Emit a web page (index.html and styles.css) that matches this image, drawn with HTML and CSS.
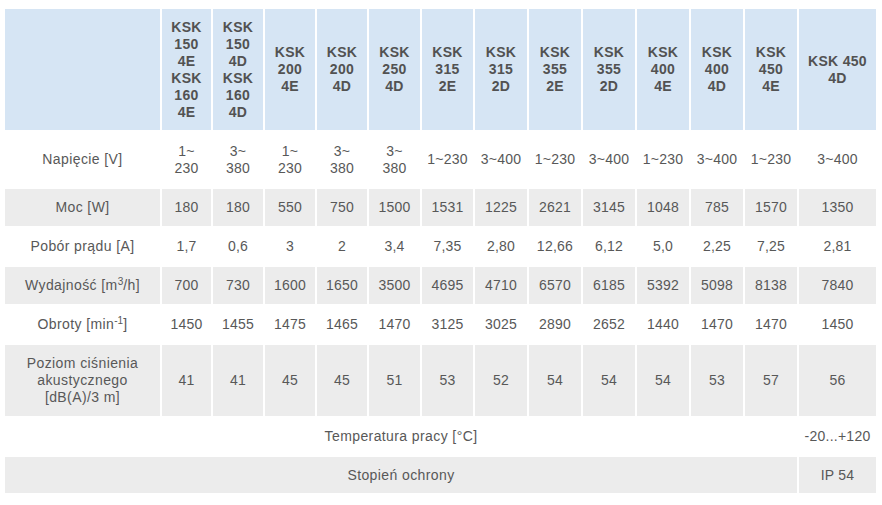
FILE: index.html
```html
<!DOCTYPE html>
<html lang="pl">
<head>
<meta charset="utf-8">
<title>KSK</title>
<link rel="stylesheet" href="styles.css">
</head>
<body>
<table class="spec">
  <colgroup>
    <col class="c-first">
    <col class="c49"><col class="c50"><col class="c50"><col class="c50">
    <col class="c51"><col class="c51"><col class="c52"><col class="c52">
    <col class="c52"><col class="c52"><col class="c52"><col class="c52">
    <col class="c-last">
  </colgroup>
  <thead>
    <tr class="r-head">
      <th></th>
      <th>KSK 150 4E KSK 160 4E</th>
      <th>KSK 150 4D KSK 160 4D</th>
      <th>KSK 200 4E</th>
      <th>KSK 200 4D</th>
      <th>KSK 250 4D</th>
      <th>KSK 315 2E</th>
      <th>KSK 315 2D</th>
      <th>KSK 355 2E</th>
      <th>KSK 355 2D</th>
      <th>KSK 400 4E</th>
      <th>KSK 400 4D</th>
      <th>KSK 450 4E</th>
      <th>KSK 450 4D</th>
    </tr>
  </thead>
  <tbody>
    <tr class="r-volt">
      <td class="label">Napięcie [V]</td>
      <td>1~ 230</td><td>3~ 380</td><td>1~ 230</td><td>3~ 380</td><td>3~ 380</td>
      <td>1~230</td><td>3~400</td><td>1~230</td><td>3~400</td><td>1~230</td><td>3~400</td><td>1~230</td><td>3~400</td>
    </tr>
    <tr class="r-std grey">
      <td class="label">Moc [W]</td>
      <td>180</td><td>180</td><td>550</td><td>750</td><td>1500</td><td>1531</td><td>1225</td><td>2621</td><td>3145</td><td>1048</td><td>785</td><td>1570</td><td>1350</td>
    </tr>
    <tr class="r-std">
      <td class="label">Pobór prądu [A]</td>
      <td>1,7</td><td>0,6</td><td>3</td><td>2</td><td>3,4</td><td>7,35</td><td>2,80</td><td>12,66</td><td>6,12</td><td>5,0</td><td>2,25</td><td>7,25</td><td>2,81</td>
    </tr>
    <tr class="r-std grey">
      <td class="label">Wydajność [m<sup>3</sup>/h]</td>
      <td>700</td><td>730</td><td>1600</td><td>1650</td><td>3500</td><td>4695</td><td>4710</td><td>6570</td><td>6185</td><td>5392</td><td>5098</td><td>8138</td><td>7840</td>
    </tr>
    <tr class="r-std">
      <td class="label">Obroty [min<sup>-1</sup>]</td>
      <td>1450</td><td>1455</td><td>1475</td><td>1465</td><td>1470</td><td>3125</td><td>3025</td><td>2890</td><td>2652</td><td>1440</td><td>1470</td><td>1470</td><td>1450</td>
    </tr>
    <tr class="r-tall grey">
      <td class="label">Poziom ciśnienia akustycznego [dB(A)/3 m]</td>
      <td>41</td><td>41</td><td>45</td><td>45</td><td>51</td><td>53</td><td>52</td><td>54</td><td>54</td><td>54</td><td>53</td><td>57</td><td>56</td>
    </tr>
    <tr class="r-std">
      <td class="label" colspan="13">Temperatura pracy [°C]</td>
      <td>-20...+120</td>
    </tr>
    <tr class="r-last grey">
      <td class="label" colspan="13">Stopień ochrony</td>
      <td>IP 54</td>
    </tr>
  </tbody>
</table>
</body>
</html>
```

FILE: styles.css
```css
html, body {
  margin: 0;
  padding: 0;
  background: #ffffff;
}

.spec {
  margin: 7px 0 0 3px;
  width: 875px;
  table-layout: fixed;
  border-collapse: separate;
  border-spacing: 2px;
  font-family: "Liberation Sans", Arial, sans-serif;
  font-size: 14px;
  line-height: 17px;
  color: #585858;
}

.c-first { width: 155px; }
.c49 { width: 49px; }
.c50 { width: 50px; }
.c51 { width: 51px; }
.c52 { width: 52px; }
.c-last { width: 77px; }

.spec th,
.spec td {
  padding: 0 4px;
  text-align: center;
  vertical-align: middle;
  letter-spacing: 0.25px;
}

.spec th {
  background: #d6e5f4;
  font-weight: bold;
  color: #525252;
  letter-spacing: 0.3px;
}

.spec td.label {
  padding: 0 10px;
  letter-spacing: 0.4px;
}

.r-head { height: 121px; }
.r-volt { height: 55px; }
.r-std { height: 37px; }
.r-tall { height: 71px; }
.r-last { height: 36px; }

.grey td {
  background: #ececec;
}

.spec sup {
  font-size: 10px;
  line-height: 0;
  vertical-align: 5px;
  letter-spacing: 0;
}
```
